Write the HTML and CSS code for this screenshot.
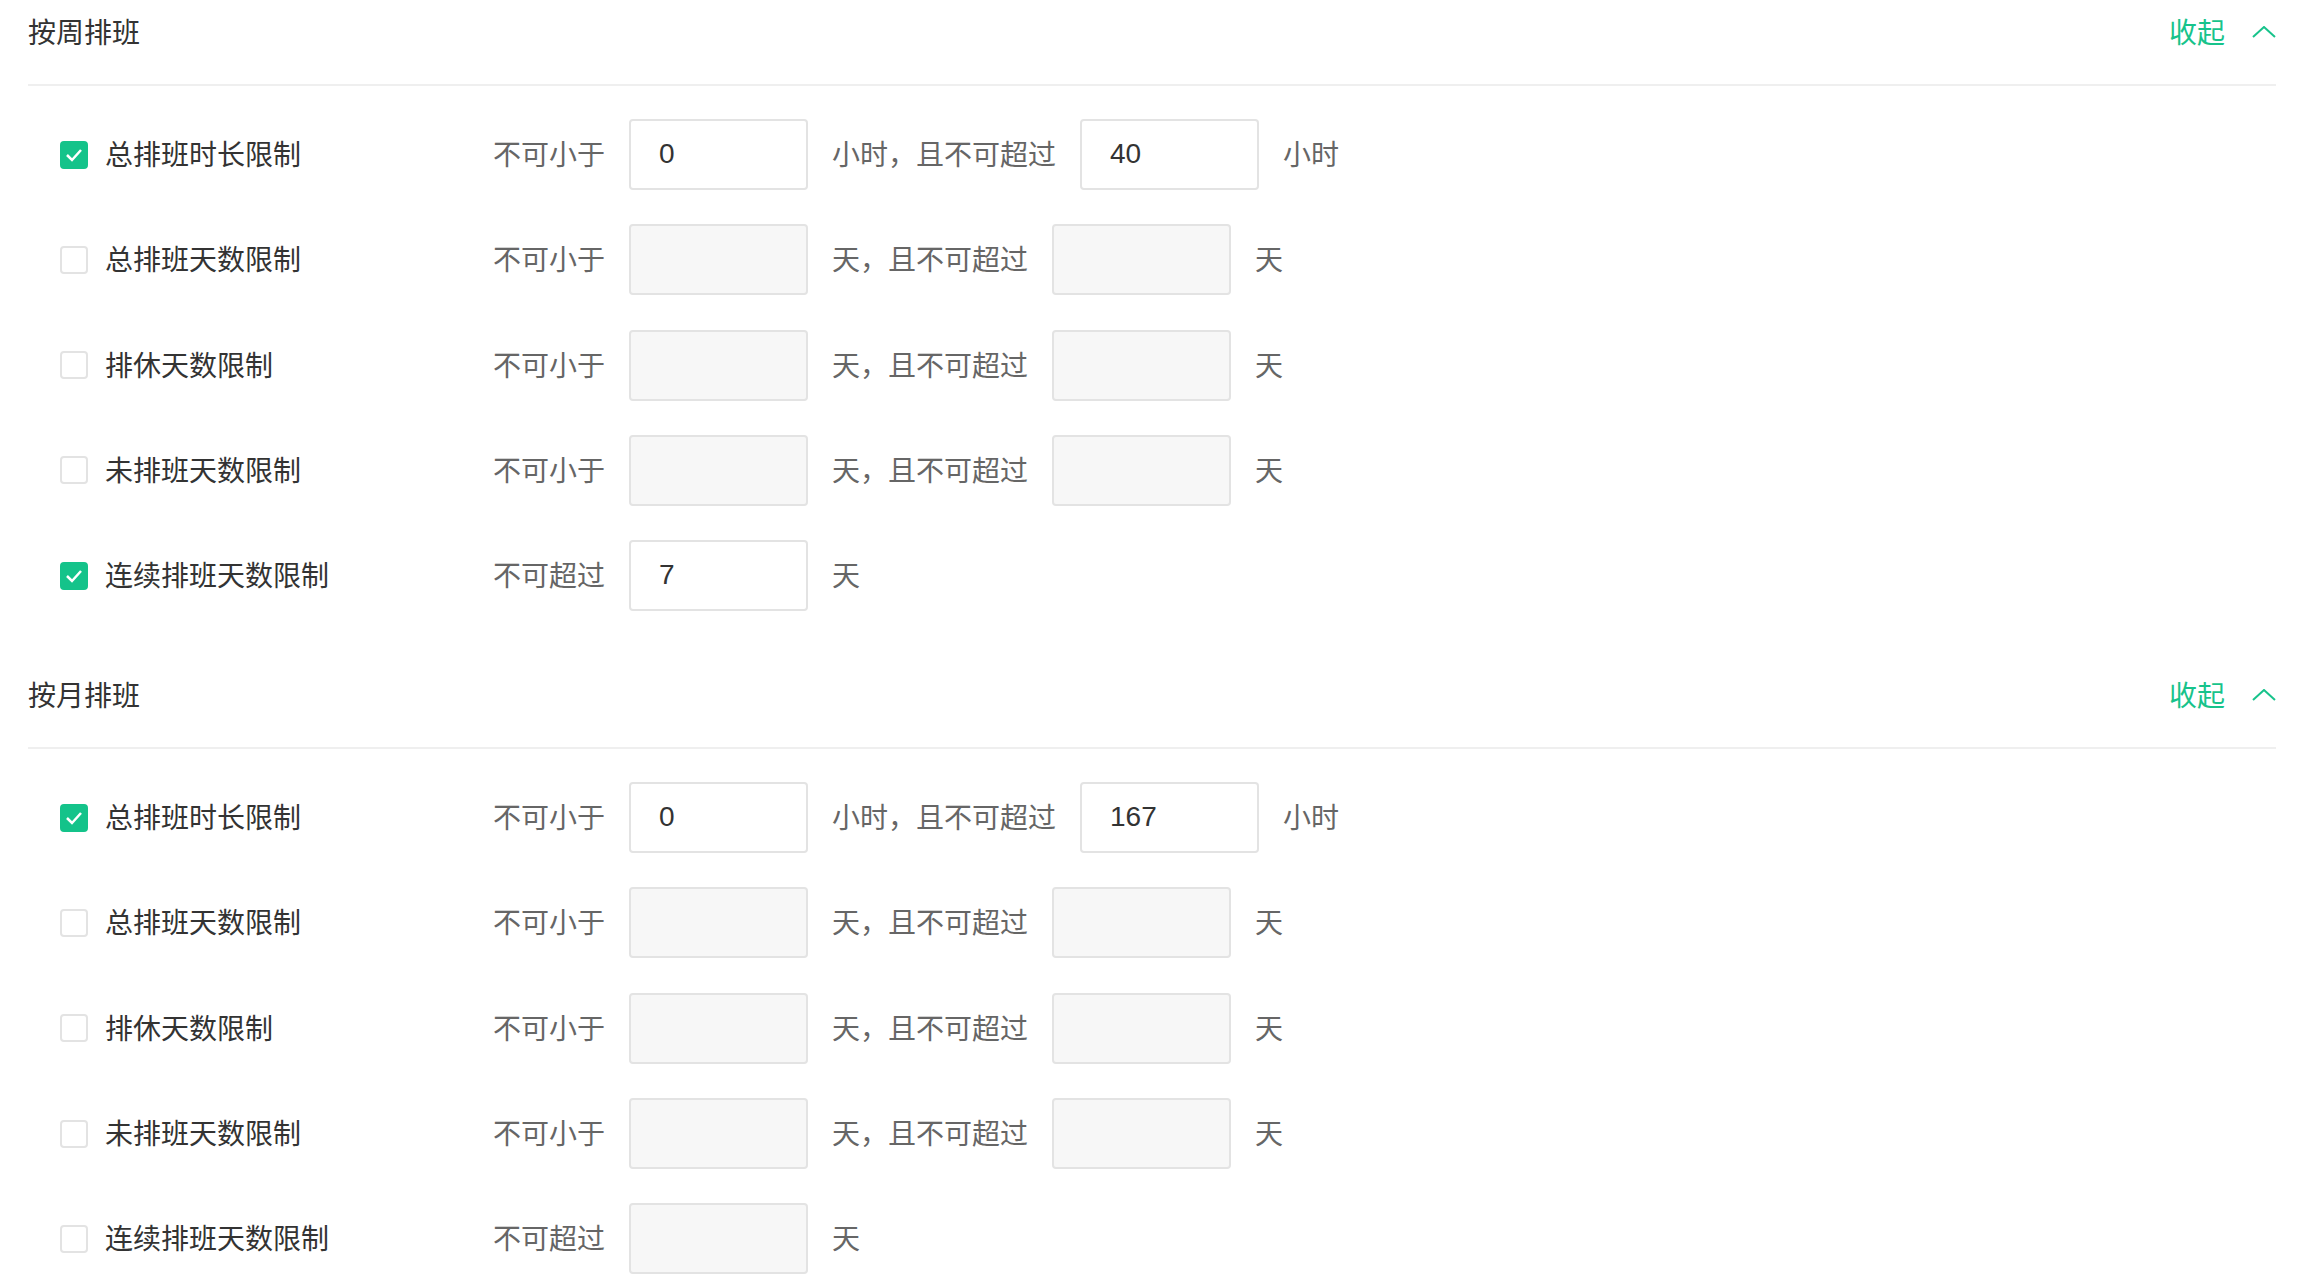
FILE: index.html
```html
<!DOCTYPE html>
<html lang="zh-CN">
<head>
<meta charset="utf-8">
<title>排班规则</title>
<link rel="stylesheet" href="styles.css">
</head>
<body>
<div class="page">
  <section class="group">
    <div class="group-head">
      <span class="group-title">按周排班</span>
      <span class="toggle"><span class="toggle-text">收起</span><svg class="chev" width="24" height="12" viewBox="0 0 24 12"><path d="M1 11 L12 1 L23 11" fill="none" stroke="currentColor" stroke-width="2"/></svg></span>
    </div>
    <div class="rules">
      <div class="rule">
        <span class="rule-name"><span class="check on"><svg width="24" height="24" viewBox="0 0 24 24"><path d="M5 12 L10 17 L19 7" fill="none" stroke="#fff" stroke-width="2.5"/></svg></span><span class="name-text">总排班时长限制</span></span>
        <span class="txt">不可小于</span><input class="num" value="0"><span class="txt">小时，且不可超过</span><input class="num" value="40"><span class="txt">小时</span>
      </div>
      <div class="rule">
        <span class="rule-name"><span class="check"></span><span class="name-text">总排班天数限制</span></span>
        <span class="txt">不可小于</span><input class="num" disabled><span class="txt">天，且不可超过</span><input class="num" disabled><span class="txt">天</span>
      </div>
      <div class="rule">
        <span class="rule-name"><span class="check"></span><span class="name-text">排休天数限制</span></span>
        <span class="txt">不可小于</span><input class="num" disabled><span class="txt">天，且不可超过</span><input class="num" disabled><span class="txt">天</span>
      </div>
      <div class="rule">
        <span class="rule-name"><span class="check"></span><span class="name-text">未排班天数限制</span></span>
        <span class="txt">不可小于</span><input class="num" disabled><span class="txt">天，且不可超过</span><input class="num" disabled><span class="txt">天</span>
      </div>
      <div class="rule">
        <span class="rule-name"><span class="check on"><svg width="24" height="24" viewBox="0 0 24 24"><path d="M5 12 L10 17 L19 7" fill="none" stroke="#fff" stroke-width="2.5"/></svg></span><span class="name-text">连续排班天数限制</span></span>
        <span class="txt">不可超过</span><input class="num" value="7"><span class="txt">天</span>
      </div>
    </div>
  </section>

  <section class="group">
    <div class="group-head">
      <span class="group-title">按月排班</span>
      <span class="toggle"><span class="toggle-text">收起</span><svg class="chev" width="24" height="12" viewBox="0 0 24 12"><path d="M1 11 L12 1 L23 11" fill="none" stroke="currentColor" stroke-width="2"/></svg></span>
    </div>
    <div class="rules">
      <div class="rule">
        <span class="rule-name"><span class="check on"><svg width="24" height="24" viewBox="0 0 24 24"><path d="M5 12 L10 17 L19 7" fill="none" stroke="#fff" stroke-width="2.5"/></svg></span><span class="name-text">总排班时长限制</span></span>
        <span class="txt">不可小于</span><input class="num" value="0"><span class="txt">小时，且不可超过</span><input class="num" value="167"><span class="txt">小时</span>
      </div>
      <div class="rule">
        <span class="rule-name"><span class="check"></span><span class="name-text">总排班天数限制</span></span>
        <span class="txt">不可小于</span><input class="num" disabled><span class="txt">天，且不可超过</span><input class="num" disabled><span class="txt">天</span>
      </div>
      <div class="rule">
        <span class="rule-name"><span class="check"></span><span class="name-text">排休天数限制</span></span>
        <span class="txt">不可小于</span><input class="num" disabled><span class="txt">天，且不可超过</span><input class="num" disabled><span class="txt">天</span>
      </div>
      <div class="rule">
        <span class="rule-name"><span class="check"></span><span class="name-text">未排班天数限制</span></span>
        <span class="txt">不可小于</span><input class="num" disabled><span class="txt">天，且不可超过</span><input class="num" disabled><span class="txt">天</span>
      </div>
      <div class="rule">
        <span class="rule-name"><span class="check"></span><span class="name-text">连续排班天数限制</span></span>
        <span class="txt">不可超过</span><input class="num" disabled><span class="txt">天</span>
      </div>
    </div>
  </section>
</div>
</body>
</html>
```

FILE: styles.css
```css
body {
  margin: 0;
  background: #fff;
  font-family: "Noto Sans CJK SC", sans-serif;
  font-size: 28px;
  color: #333;
}

.page {
  padding: 0 36px 0 28px;
}

.group + .group {
  margin-top: 52px;
}

.group-head {
  display: flex;
  align-items: center;
  justify-content: space-between;
  height: 64px;
  padding-bottom: 20px;
  border-bottom: 2px solid #efefef;
}

.group-title {
  line-height: 1;
  color: #333;
  padding-bottom: 3px;
}

.toggle {
  display: flex;
  align-items: center;
  gap: 27px;
  color: #17c38b;
  line-height: 1;
}

.toggle-text {
  padding-bottom: 3px;
}

.chev {
  display: block;
}

.rules {
  display: flex;
  flex-direction: column;
  gap: 34.3px;
  padding: 33px 0 0 32px;
}

.rule {
  display: flex;
  align-items: center;
  gap: 24px;
  height: 71px;
}

.rule-name {
  width: 409px;
  display: flex;
  align-items: center;
  gap: 17px;
  color: #333;
  line-height: 1;
}

.name-text {
  padding-bottom: 3px;
}

.check {
  width: 28px;
  height: 28px;
  box-sizing: border-box;
  border: 2px solid #e3e3e3;
  border-radius: 4px;
  background: #fff;
  flex: none;
}

.check svg {
  display: block;
}

.check.on {
  background: #14c38a;
  border-color: #14c38a;
}

.txt {
  color: #666;
  line-height: 1;
  white-space: nowrap;
  padding-bottom: 3px;
}

.num {
  width: 179px;
  height: 71px;
  box-sizing: border-box;
  margin: 0;
  border: 2px solid #e3e3e3;
  border-radius: 4px;
  padding: 0 0 2px 28px;
  font-family: "Liberation Sans", "Noto Sans CJK SC", sans-serif;
  font-size: 28px;
  color: #333;
  background: #fff;
  outline: none;
  flex: none;
}

.num:disabled {
  background: #f7f7f7;
}
```
